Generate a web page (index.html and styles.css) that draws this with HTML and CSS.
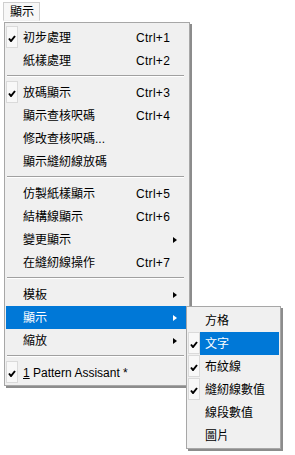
FILE: index.html
```html
<!DOCTYPE html>
<html lang="zh-Hant">
<head>
    <meta charset="UTF-8">
    <meta name="viewport" content="width=device-width, initial-scale=1.0">
    <title>顯示選單</title>
    <link rel="stylesheet" href="styles.css">
</head>
<body>
    <div class="menubar">
        <div class="menubar-item">顯示</div>
    </div>

    <div class="menu main-menu">
        <div class="row"><span class="check on"><svg viewBox="0 0 8 7"><path d="M1 3.5 L3 6 L7 1"/></svg></span><span class="body"><span class="label">初步處理</span><span class="key">Ctrl+1</span><span class="arrow"></span></span></div>
        <div class="row"><span class="check"></span><span class="body"><span class="label">紙樣處理</span><span class="key">Ctrl+2</span><span class="arrow"></span></span></div>
        <div class="sep"></div>
        <div class="row"><span class="check on"><svg viewBox="0 0 8 7"><path d="M1 3.5 L3 6 L7 1"/></svg></span><span class="body"><span class="label">放碼顯示</span><span class="key">Ctrl+3</span><span class="arrow"></span></span></div>
        <div class="row"><span class="check"></span><span class="body"><span class="label">顯示查核呎碼</span><span class="key">Ctrl+4</span><span class="arrow"></span></span></div>
        <div class="row"><span class="check"></span><span class="body"><span class="label">修改查核呎碼...</span><span class="key"></span><span class="arrow"></span></span></div>
        <div class="row"><span class="check"></span><span class="body"><span class="label">顯示縫紉線放碼</span><span class="key"></span><span class="arrow"></span></span></div>
        <div class="sep"></div>
        <div class="row"><span class="check"></span><span class="body"><span class="label">仿製紙樣顯示</span><span class="key">Ctrl+5</span><span class="arrow"></span></span></div>
        <div class="row"><span class="check"></span><span class="body"><span class="label">結構線顯示</span><span class="key">Ctrl+6</span><span class="arrow"></span></span></div>
        <div class="row"><span class="check"></span><span class="body"><span class="label">變更顯示</span><span class="key"></span><span class="arrow"><i class="tri"></i></span></span></div>
        <div class="row"><span class="check"></span><span class="body"><span class="label">在縫紉線操作</span><span class="key">Ctrl+7</span><span class="arrow"></span></span></div>
        <div class="sep"></div>
        <div class="row"><span class="check"></span><span class="body"><span class="label">模板</span><span class="key"></span><span class="arrow"><i class="tri"></i></span></span></div>
        <div class="row active"><span class="check"></span><span class="body"><span class="label">顯示</span><span class="key"></span><span class="arrow"><i class="tri"></i></span></span></div>
        <div class="row"><span class="check"></span><span class="body"><span class="label">縮放</span><span class="key"></span><span class="arrow"><i class="tri"></i></span></span></div>
        <div class="sep"></div>
        <div class="row"><span class="check on"><svg viewBox="0 0 8 7"><path d="M1 3.5 L3 6 L7 1"/></svg></span><span class="body"><span class="label wide"><u>1</u> Pattern Assisant *</span></span></div>
    </div>

    <div class="menu sub-menu">
        <div class="row"><span class="check"></span><span class="body">方格</span></div>
        <div class="row"><span class="check on"><svg viewBox="0 0 8 7"><path d="M1 3.5 L3 6 L7 1"/></svg></span><span class="body active">文字</span></div>
        <div class="row"><span class="check on"><svg viewBox="0 0 8 7"><path d="M1 3.5 L3 6 L7 1"/></svg></span><span class="body">布紋線</span></div>
        <div class="row"><span class="check on"><svg viewBox="0 0 8 7"><path d="M1 3.5 L3 6 L7 1"/></svg></span><span class="body">縫紉線數值</span></div>
        <div class="row"><span class="check"></span><span class="body">線段數值</span></div>
        <div class="row"><span class="check"></span><span class="body">圖片</span></div>
    </div>
</body>
</html>
```

FILE: styles.css
```css
body {
    margin: 0;
    background-color: #fff;
    font-family: "Liberation Sans", "Noto Sans CJK TC", sans-serif;
    font-size: 12px;
    color: #000;
}
.menubar {
    height: 22px;
    padding: 2px 0 0 3px;
    box-sizing: border-box;
}
.menubar-item {
    display: inline-block;
    height: 19px;
    line-height: 19px;
    padding: 0 5px 0 6px;
    border: 1px solid #cfcfcf;
    border-bottom-color: #f0f0f0;
    box-sizing: border-box;
    background-color: #f7f7f7;
}
.menu {
    position: absolute;
    background-color: #f0f0f0;
    border: 1px solid #a7a7a7;
    box-sizing: border-box;
    box-shadow: 2px 2px 0 #8c8c8c;
}
.main-menu {
    left: 4px;
    top: 22px;
    width: 186px;
    padding: 3px 3px 1px 1px;
}
.sub-menu {
    left: 186px;
    top: 306px;
    width: 95px;
    padding: 2px 1px 1px 1px;
}
.row {
    display: flex;
    height: 23px;
    white-space: nowrap;
}
.check {
    width: 12px;
    height: 22px;
    box-sizing: border-box;
    flex: none;
    display: flex;
    align-items: center;
    justify-content: center;
}
.check.on {
    background-color: #f8f8f8;
    border: 1px solid #dadada;
}
.check svg {
    width: 8px;
    height: 7px;
    margin-top: 3px;
    fill: none;
    stroke: #000;
    stroke-width: 2;
}
.body {
    flex: 1;
    display: grid;
    grid-template-columns: 113px 1fr 16px;
    padding: 2px 0 0 5px;
    line-height: 21px;
}
.sub-menu .body {
    display: block;
}
.key {
    letter-spacing: 0.3px;
}
.label.wide {
    grid-column: 1 / 4;
}
.arrow {
    display: flex;
    align-items: center;
    margin-top: -2px;
}
.tri {
    width: 0;
    height: 0;
    margin-left: 3px;
    border-top: 3.5px solid transparent;
    border-bottom: 3.5px solid transparent;
    border-left: 4px solid #000;
}
.row.active,
.body.active {
    background-color: #0078d7;
    color: #fff;
}
.row.active .tri {
    border-left-color: #fff;
}
.sep {
    margin: 3px 2px 4px 1px;
    border-top: 1px solid #a0a0a0;
    border-bottom: 1px solid #fff;
}
```
